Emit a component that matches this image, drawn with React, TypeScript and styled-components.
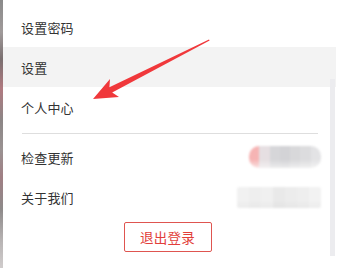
import React from "react";
import styled, { createGlobalStyle } from "styled-components";

const Global = createGlobalStyle`
  html, body { margin: 0; padding: 0; background: #ffffff; }
  body { font-family: "Noto Sans CJK SC", "Noto Sans", sans-serif; }
`;

const Screen = styled.div`
  position: relative;
  display: flex;
  width: 337px;
  height: 268px;
  overflow: hidden;
  background: #ffffff;
`;

const EdgeStrip = styled.div`
  width: 3px;
  flex: none;
  background: linear-gradient(
    180deg,
    #8a8a8a 0%,
    #a09a9a 12%,
    #7a6f70 22%,
    #b07a80 33%,
    #8c8686 45%,
    #9a9292 56%,
    #a07f84 66%,
    #8e8a8a 78%,
    #b8b4b4 90%,
    #d0cccc 100%
  );
`;

const Menu = styled.div`
  flex: 1;
  display: flex;
  flex-direction: column;
  padding-top: 7px;
  padding-right: 1px;
`;

const Row = styled.div<{ $active?: boolean }>`
  display: flex;
  align-items: center;
  justify-content: space-between;
  height: 40px;
  padding: 0 15px 0 18px;
  background: ${(p) => (p.$active ? "#f3f3f3" : "transparent")};
  font-size: 13px;
  color: #333333;
  letter-spacing: 0.2px;
`;

const Divider = styled.div`
  height: 1px;
  margin: 6px 18px 3px 19px;
  background: #dedede;
`;

const Mosaic = styled.div<{ $w: number; $h: number; $r: number }>`
  display: flex;
  width: ${(p) => p.$w}px;
  height: ${(p) => p.$h}px;
  border-radius: ${(p) => p.$r}px;
  overflow: hidden;
  filter: blur(1.2px);
`;

const Tile = styled.div<{ $c: string; $c2: string }>`
  flex: 1;
  background: linear-gradient(180deg, ${(p) => p.$c} 0%, ${(p) => p.$c} 62%, ${(p) => p.$c2} 100%);
`;

const Footer = styled.div`
  display: flex;
  justify-content: center;
  padding-top: 5px;
  padding-right: 4px;
`;

const LogoutButton = styled.button`
  width: 88px;
  height: 30px;
  border: 1px solid #df5550;
  border-radius: 2px;
  background: #ffffff;
  color: #e23e3a;
  font-family: "Noto Sans CJK SC", sans-serif;
  font-size: 13.5px;
  letter-spacing: 0.3px;
  padding: 0;
  cursor: pointer;
`;

const ScrollTrack = styled.div`
  position: absolute;
  right: 2px;
  top: 79px;
  width: 5px;
  height: 177px;
  background: #ececef;
`;

const Annotation = styled.svg`
  position: absolute;
  left: 0;
  top: 0;
  pointer-events: none;
`;

const versionTiles: [string, string][] = [
  ["#f6b4b4", "#fae3e3"],
  ["#e6dfe2", "#f3f0f1"],
  ["#d6d6d9", "#ededee"],
  ["#d3d3d6", "#ececed"],
  ["#d8d8da", "#efeff0"],
  ["#dcdcde", "#f1f1f1"],
  ["#e3e3e5", "#f3f3f3"],
];

const aboutTiles: [string, string][] = [
  ["#f1f1f1", "#ececec"],
  ["#eeeeee", "#e9e9e9"],
  ["#f0f0f0", "#ebebeb"],
  ["#e9e9e9", "#e4e4e4"],
  ["#ececec", "#e6e6e6"],
  ["#eeeeee", "#e8e8e8"],
  ["#f2f2f2", "#ededed"],
];

export default function App() {
  return (
    <>
      <Global />
      <Screen>
        <EdgeStrip />
        <Menu>
          <Row>设置密码</Row>
          <Row $active>设置</Row>
          <Row>个人中心</Row>
          <Divider />
          <Row>
            检查更新
            <Mosaic $w={72} $h={22} $r={10}>
              {versionTiles.map(([c, c2], i) => (
                <Tile key={i} $c={c} $c2={c2} />
              ))}
            </Mosaic>
          </Row>
          <Row>
            关于我们
            <Mosaic $w={84} $h={21} $r={2}>
              {aboutTiles.map(([c, c2], i) => (
                <Tile key={i} $c={c} $c2={c2} />
              ))}
            </Mosaic>
          </Row>
          <Footer>
            <LogoutButton>退出登录</LogoutButton>
          </Footer>
        </Menu>
        <ScrollTrack />
        <Annotation width="337" height="268" viewBox="0 0 337 268">
          <polygon
            points="93,99 110,79 109.4,87.2 209,39.4 209.6,40.6 112.2,92.6 119,97"
            fill="#f0383b"
          />
        </Annotation>
      </Screen>
    </>
  );
}
